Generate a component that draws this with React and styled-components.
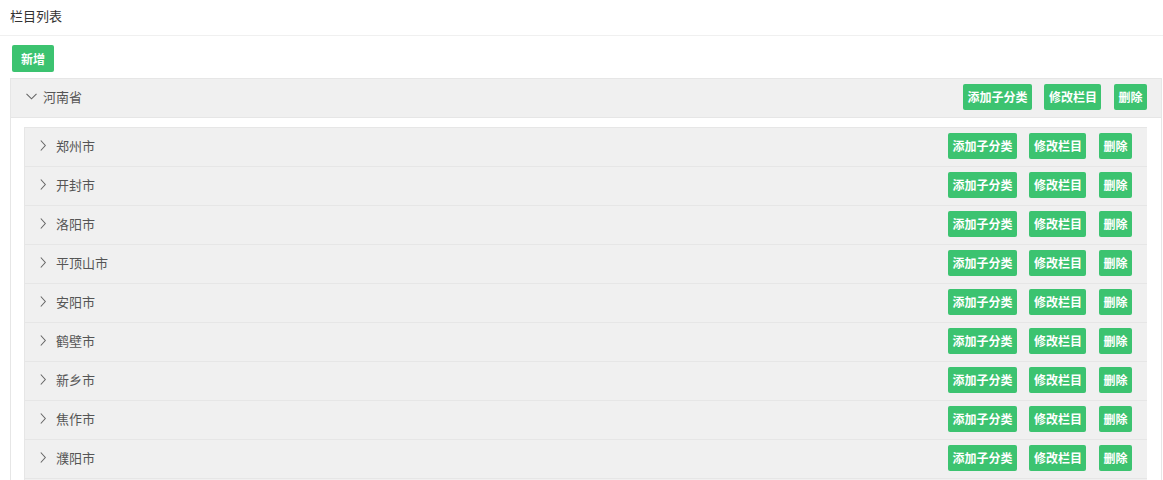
import React from "react";
import styled, { createGlobalStyle } from "styled-components";

const Global = createGlobalStyle`
  html, body { margin: 0; padding: 0; overflow: hidden; background: #fff; }
  body { font-family: "Noto Sans CJK SC", "Noto Sans", sans-serif; color: #333; }
  * { box-sizing: border-box; }
`;

const Page = styled.div`
  width: 1163px;
`;

const TitleBar = styled.div`
  height: 36px;
  padding: 0 10px;
  font-size: 13px;
  line-height: 32px;
  color: #333;
  border-bottom: 1px solid #f0f0f0;
`;

const Content = styled.div`
  padding: 9px 1px 0 10px;
`;

const Btn = styled.button`
  border: 0;
  margin: 0;
  background: #3cc370;
  color: #fff;
  font-family: "Noto Sans CJK SC", "Noto Sans", sans-serif;
  font-weight: 700;
  font-size: 12px;
  height: ${(p) => (p.$big ? "27px" : "26px")};
  line-height: ${(p) => (p.$big ? "27px" : "26px")};
  padding: 0 ${(p) => (p.$big ? "9px" : "4.5px")};
  border-radius: 2px;
  cursor: pointer;
  white-space: nowrap;
`;

const AddBtn = styled(Btn)`
  margin-left: 2px;
  margin-bottom: 6px;
  display: block;
`;

const Panel = styled.div`
  border: 1px solid #e6e6e6;
  border-bottom: 0;
`;

const Row = styled.div`
  display: flex;
  align-items: center;
  height: 39px;
  padding: 0 ${(p) => (p.$head ? "14px" : "15px")} 3px 15px;
  background: #f0f0f0;
  border-bottom: 1px solid #e6e6e6;
  font-size: 13px;
  color: #555;
`;

const Label = styled.div`
  flex: 1;
  display: flex;
  align-items: center;
  gap: ${(p) => (p.$head ? "6px" : "10px")};
`;

const Actions = styled.div`
  display: flex;
  gap: 12.5px;
`;

const Body = styled.div`
  padding: 9px 14px 0 13px;
`;

const Inner = styled.div`
  border: 1px solid #e6e6e6;
  border-bottom: 0;
  border-right: 0;
`;

const Chevron = ({ down }) =>
  down ? (
    <svg width="11" height="7" viewBox="0 0 11 7" fill="none">
      <path d="M0.5 0.8 L5.5 5.8 L10.5 0.8" stroke="#666" strokeWidth="1.1" />
    </svg>
  ) : (
    <svg width="6" height="11" viewBox="0 0 6 11" fill="none">
      <path d="M0.8 0.5 L5.3 5.5 L0.8 10.5" stroke="#666" strokeWidth="1.1" />
    </svg>
  );

const ActionGroup = () => (
  <Actions>
    <Btn>添加子分类</Btn>
    <Btn>修改栏目</Btn>
    <Btn>删除</Btn>
  </Actions>
);

const cities = [
  "郑州市", "开封市", "洛阳市", "平顶山市", "安阳市", "鹤壁市", "新乡市", "焦作市", "濮阳市",
  "许昌市", "漯河市", "三门峡市", "南阳市", "商丘市", "信阳市", "周口市", "驻马店市",
];

export default function App() {
  return (
    <Page>
      <Global />
      <TitleBar>栏目列表</TitleBar>
      <Content>
        <AddBtn $big>新增</AddBtn>
        <Panel>
          <Row $head>
            <Label $head>
              <Chevron down />
              河南省
            </Label>
            <ActionGroup />
          </Row>
          <Body>
            <Inner>
              {cities.map((c) => (
                <Row key={c}>
                  <Label>
                    <Chevron />
                    {c}
                  </Label>
                  <ActionGroup />
                </Row>
              ))}
            </Inner>
          </Body>
        </Panel>
      </Content>
    </Page>
  );
}
